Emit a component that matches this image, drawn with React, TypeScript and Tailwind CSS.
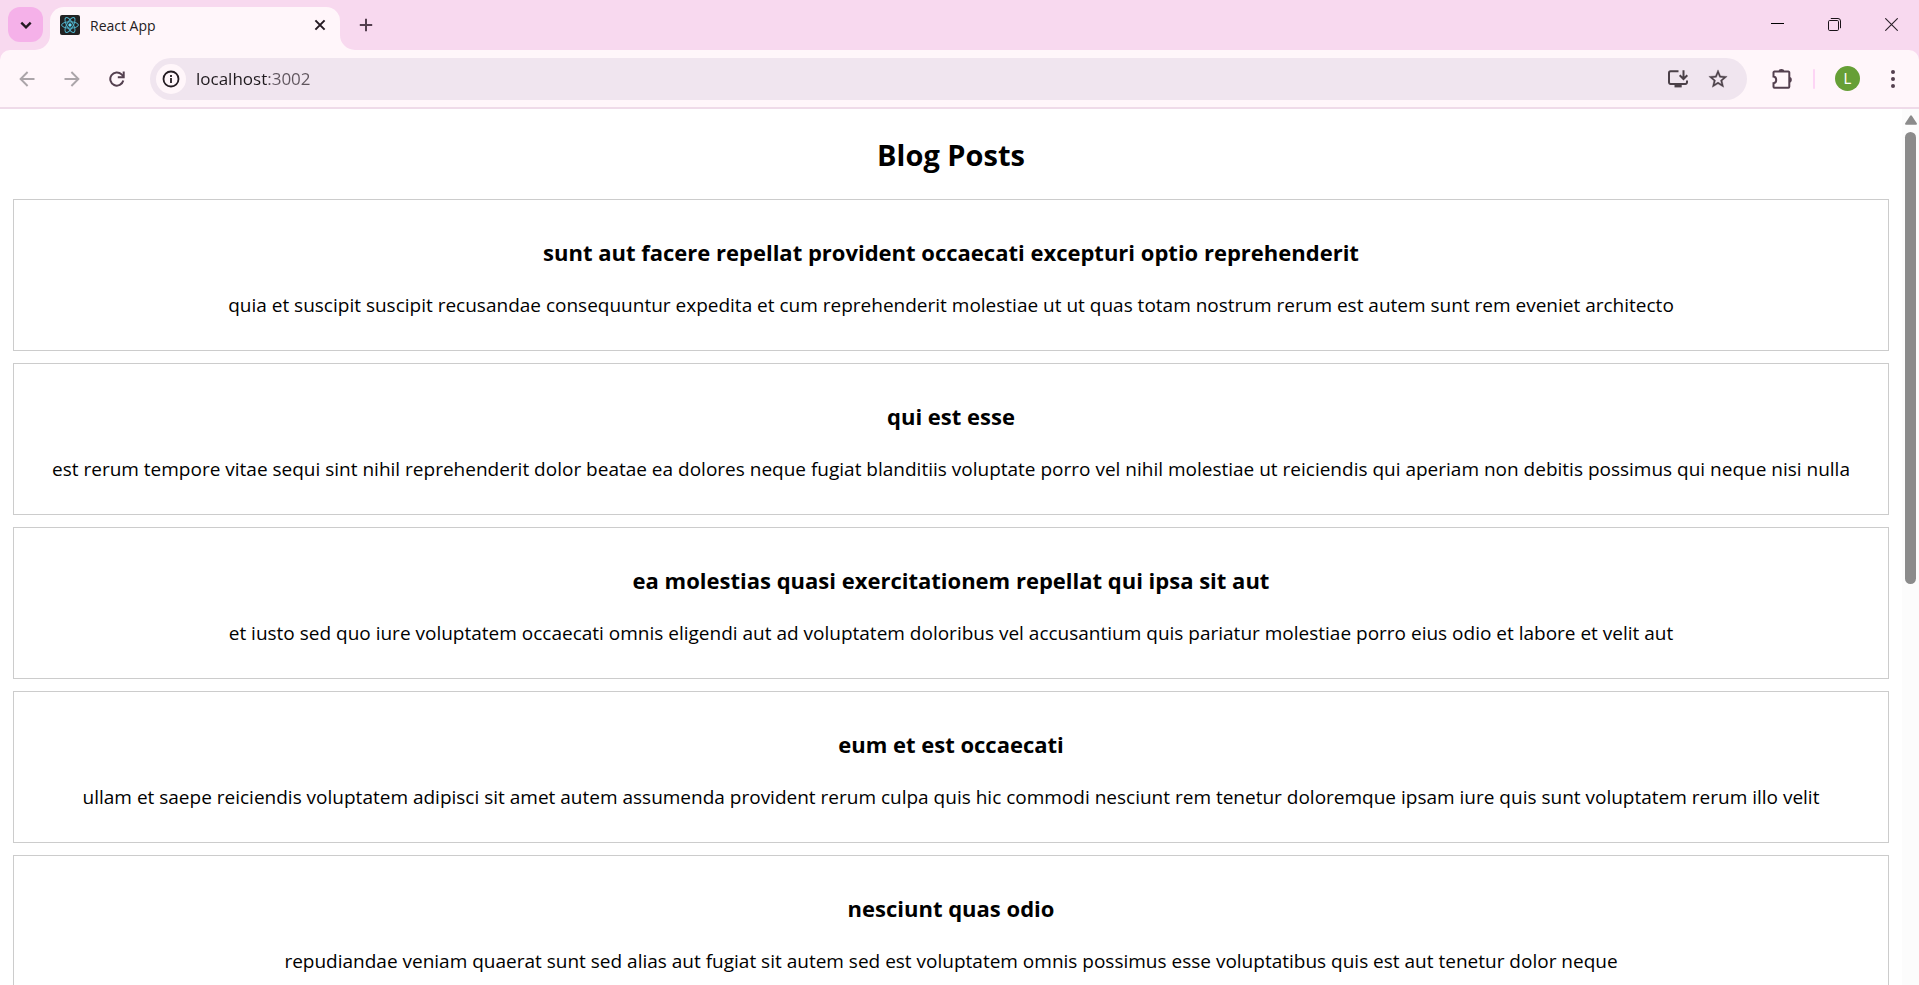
import React, { useState } from "react";

type Post = { id: number; title: string; body: string };

const posts: Post[] = [
  {
    id: 1,
    title: "sunt aut facere repellat provident occaecati excepturi optio reprehenderit",
    body: "quia et suscipit suscipit recusandae consequuntur expedita et cum reprehenderit molestiae ut ut quas totam nostrum rerum est autem sunt rem eveniet architecto",
  },
  {
    id: 2,
    title: "qui est esse",
    body: "est rerum tempore vitae sequi sint nihil reprehenderit dolor beatae ea dolores neque fugiat blanditiis voluptate porro vel nihil molestiae ut reiciendis qui aperiam non debitis possimus qui neque nisi nulla",
  },
  {
    id: 3,
    title: "ea molestias quasi exercitationem repellat qui ipsa sit aut",
    body: "et iusto sed quo iure voluptatem occaecati omnis eligendi aut ad voluptatem doloribus vel accusantium quis pariatur molestiae porro eius odio et labore et velit aut",
  },
  {
    id: 4,
    title: "eum et est occaecati",
    body: "ullam et saepe reiciendis voluptatem adipisci sit amet autem assumenda provident rerum culpa quis hic commodi nesciunt rem tenetur doloremque ipsam iure quis sunt voluptatem rerum illo velit",
  },
  {
    id: 5,
    title: "nesciunt quas odio",
    body: "repudiandae veniam quaerat sunt sed alias aut fugiat sit autem sed est voluptatem omnis possimus esse voluptatibus quis est aut tenetur dolor neque",
  },
];

function ReactFavicon() {
  return (
    <svg width="20" height="20" viewBox="0 0 20 20" aria-hidden="true">
      <rect width="20" height="20" rx="2" fill="#222222" />
      <g fill="none" stroke="#4fb3cb" strokeWidth="1">
        <ellipse cx="10" cy="10" rx="8.4" ry="3.2" />
        <ellipse cx="10" cy="10" rx="8.4" ry="3.2" transform="rotate(60 10 10)" />
        <ellipse cx="10" cy="10" rx="8.4" ry="3.2" transform="rotate(120 10 10)" />
      </g>
      <circle cx="10" cy="10" r="1.7" fill="#61dafb" />
    </svg>
  );
}

function TabStrip() {
  return (
    <div className="flex h-[50px] items-start pl-2">
      <button
        aria-label="Search tabs"
        className="mt-[7px] flex size-[35px] items-center justify-center rounded-[12px] bg-[#f5b1e9]"
      >
        <svg width="12" height="12" viewBox="0 0 12 12" fill="none" stroke="#241a22" strokeWidth="2.4">
          <path d="M1.3 3.7 6 8.4l4.7-4.7" />
        </svg>
      </button>
      <div className="relative ml-[7px] mt-[7px] flex h-[43px] w-[290px] items-start rounded-t-[14px] bg-[#fff6fa] pl-[10px] pr-[10px] pt-2">
        <svg className="absolute -left-[15px] bottom-0" width="15" height="15" viewBox="0 0 15 15">
          <path d="M15 0v15H0A15 15 0 0 0 15 0Z" fill="#fff6fa" />
        </svg>
        <svg className="absolute -right-[15px] bottom-0" width="15" height="15" viewBox="0 0 15 15">
          <path d="M0 0v15h15A15 15 0 0 1 0 0Z" fill="#fff6fa" />
        </svg>
        <ReactFavicon />
        <span className="ml-[10px] flex-1 text-sm leading-[22px] text-[#241c22]">React App</span>
        <button aria-label="Close tab" className="flex size-5 items-center justify-center">
          <svg width="12" height="12" viewBox="0 0 12 12" fill="none" stroke="#241a22" strokeWidth="2">
            <path d="m1.4 1.4 9.2 9.2M10.6 1.4l-9.2 9.2" />
          </svg>
        </button>
      </div>
      <button aria-label="New tab" className="ml-[11px] mt-[10px] flex size-[30px] items-center justify-center">
        <svg width="14" height="14" viewBox="0 0 14 14" fill="none" stroke="#54404f" strokeWidth="2">
          <path d="M7 .8v12.4M.8 7h12.4" />
        </svg>
      </button>
      <div className="ml-auto flex h-[49px]">
        <button aria-label="Minimize" className="flex w-[57px] items-center justify-center">
          <svg width="13" height="13" viewBox="0 0 13 13" stroke="#000" fill="none">
            <path d="M0 5.5h13" />
          </svg>
        </button>
        <button aria-label="Restore" className="flex w-[57px] items-center justify-center">
          <svg width="13" height="13" viewBox="0 0 13 13" stroke="#1a1218" fill="none">
            <rect x=".5" y="2.5" width="10" height="10" rx="1.2" />
            <path d="M2.8.5h7.2a2.5 2.5 0 0 1 2.5 2.5v7.2" />
          </svg>
        </button>
        <button aria-label="Close window" className="flex w-[56px] items-center justify-center">
          <svg width="13" height="13" viewBox="0 0 13 13" stroke="#2a2028" strokeWidth="1.1" fill="none">
            <path d="m.3.3 12.4 12.4M12.7.3.3 12.7" />
          </svg>
        </button>
      </div>
    </div>
  );
}

function Toolbar() {
  const [url, setUrl] = useState("localhost:3002");
  return (
    <div className="flex h-[59px] items-center rounded-t-[10px] border-b-2 border-[#efdbe9] bg-[#fff6fa] pl-1 pr-[6px]">
      <button aria-label="Back" className="flex h-10 w-[45px] items-center justify-center">
        <svg width="16" height="16" viewBox="0 0 16 16" fill="none" stroke="#aba5a9" strokeWidth="1.9">
          <path d="M15.5 8H2M8.6 1 1.6 8l7 7" />
        </svg>
      </button>
      <button aria-label="Forward" className="flex h-10 w-[45px] items-center justify-center">
        <svg width="16" height="16" viewBox="0 0 16 16" fill="none" stroke="#aba5a9" strokeWidth="1.9">
          <path d="M.5 8H14M7.4 1l7 7-7 7" />
        </svg>
      </button>
      <button aria-label="Reload" className="flex h-10 w-[45px] items-center justify-center">
        <svg width="16" height="16" viewBox="0 0 16 16" fill="none" stroke="#54404f" strokeWidth="2">
          <path d="M14.3 9.6A6.6 6.6 0 1 1 12.6 3.4L14.6 5.6" />
          <path d="M14.7.5v5.8H8.8" />
        </svg>
      </button>
      <div className="ml-[11px] flex h-[42px] min-w-0 flex-1 items-center rounded-full bg-[#f0e5ef] pl-[6px] pr-[9px]">
        <button
          aria-label="View site information"
          className="flex size-[30px] shrink-0 items-center justify-center rounded-full bg-[#fff6fa]"
        >
          <svg width="18" height="18" viewBox="0 0 18 18" fill="none" stroke="#241c22" strokeWidth="1.8">
            <circle cx="9" cy="9" r="7.5" />
            <path d="M9 8v4.9M9 5v1.9" />
          </svg>
        </button>
        <input
          aria-label="Address"
          value={url}
          onChange={(e) => setUrl(e.target.value)}
          className="ml-[10px] min-w-0 flex-1 bg-[linear-gradient(to_right,#1f1a1e_72px,#5f555d_72px)] bg-clip-text text-[17px] leading-6 text-transparent caret-black outline-none"
        />
        <button aria-label="Install app" className="flex h-10 w-10 shrink-0 items-center justify-center">
          <svg width="22" height="20" viewBox="0 0 22 20" fill="none" stroke="#4b4048" strokeWidth="2">
            <path d="M11.5 2.3H3.6A1.6 1.6 0 0 0 2 3.9v9.4a1.6 1.6 0 0 0 1.6 1.6h14.8a1.6 1.6 0 0 0 1.6-1.6v-1.8" />
            <path d="M16.5 1.3v8.2M12.7 6.2l3.8 3.8 3.8-3.8" />
            <path d="M7.5 15h7.2v3.4H7.500z" fill="#4b4048" stroke="none" />
          </svg>
        </button>
        <button aria-label="Bookmark this tab" className="flex h-10 w-10 shrink-0 items-center justify-center">
          <svg width="22" height="22" viewBox="0 0 24 24" fill="#4b4048" stroke="#4b4048" strokeWidth=".4">
            <path d="m22 9.24-7.19-.62L12 2 9.19 8.63 2 9.24l5.46 4.73L5.82 21 12 17.27 18.18 21l-1.63-7.03L22 9.24zM12 15.4l-3.76 2.27 1-4.28-3.32-2.88 4.38-.38L12 6.1l1.71 4.04 4.38.38-3.32 2.88 1 4.28L12 15.4z" />
          </svg>
        </button>
      </div>
      <button aria-label="Extensions" className="ml-[15px] flex h-10 w-10 items-center justify-center">
        <svg width="22" height="22" viewBox="0 0 22 22" fill="none" stroke="#54404f" strokeWidth="2">
          <path d="M3.4 3.6h14a.9.9 0 0 1 .9.9v14.3a.9.9 0 0 1-.9.9h-14a.9.9 0 0 1-.9-.9v-3.6c3.6-.6 3.6-6 0-6.6V4.5a.9.9 0 0 1 .9-.9Z" />
          <path d="M7.600 3.400a2.800 2.400 0 0 1 5.600 0ZM18.400 8.900a2.400 2.800 0 0 1 0 5.600Z" fill="#54404f" stroke="none" />
        </svg>
      </button>
      <div className="ml-[11px] h-5 w-[2px] rounded-full bg-[#fdd5f5]" />
      <button
        aria-label="Profile L"
        className="ml-5 flex size-[25px] items-center justify-center rounded-full bg-[#669f36] font-['Roboto',sans-serif] text-sm text-white"
      >
        L
      </button>
      <button aria-label="Menu" className="ml-[13px] flex h-10 w-10 items-center justify-center">
        <svg width="6" height="20" viewBox="0 0 6 20" fill="#54404f">
          <circle cx="3" cy="3" r="2" />
          <circle cx="3" cy="10" r="2" />
          <circle cx="3" cy="17" r="2" />
        </svg>
      </button>
    </div>
  );
}

function PostCard({ post }: { post: Post }) {
  return (
    <article className="border border-[#cccccc] px-3 pb-[31px] pt-9">
      <h2 className="text-[22px] font-bold leading-8">{post.title}</h2>
      <p className="mt-6 text-[19px] leading-[27px]">{post.body}</p>
    </article>
  );
}

function Scrollbar() {
  return (
    <div className="flex w-[17px] shrink-0 flex-col items-center bg-[#fcfcfc] pt-[6px]" aria-hidden="true">
      <svg width="12" height="10" viewBox="0 0 12 10" fill="#8b8b8b">
        <path d="M5 1q1-1.500 2 0l4.800 7.200q.6 1.500-.8 1.500H1q-1.400 0-.8-1.500Z" />
      </svg>
      <div className="mt-[7px] h-[52%] w-[11px] rounded-full bg-[#8b8b8b]" />
    </div>
  );
}

export default function App() {
  return (
    <div className="flex h-screen flex-col overflow-hidden bg-white font-['Open_Sans','Noto_Sans',sans-serif] text-black">
      <header className="shrink-0 bg-[#f8d9ef]">
        <TabStrip />
        <Toolbar />
      </header>
      <div className="flex min-h-0 flex-1">
        <main className="min-w-0 flex-1 overflow-hidden px-[13px] text-center">
          <h1 className="mb-6 mt-[26px] text-[29px] font-bold leading-10">Blog Posts</h1>
          <div className="flex flex-col gap-3">
            {posts.map((post) => (
              <PostCard key={post.id} post={post} />
            ))}
          </div>
        </main>
        <Scrollbar />
      </div>
    </div>
  );
}
